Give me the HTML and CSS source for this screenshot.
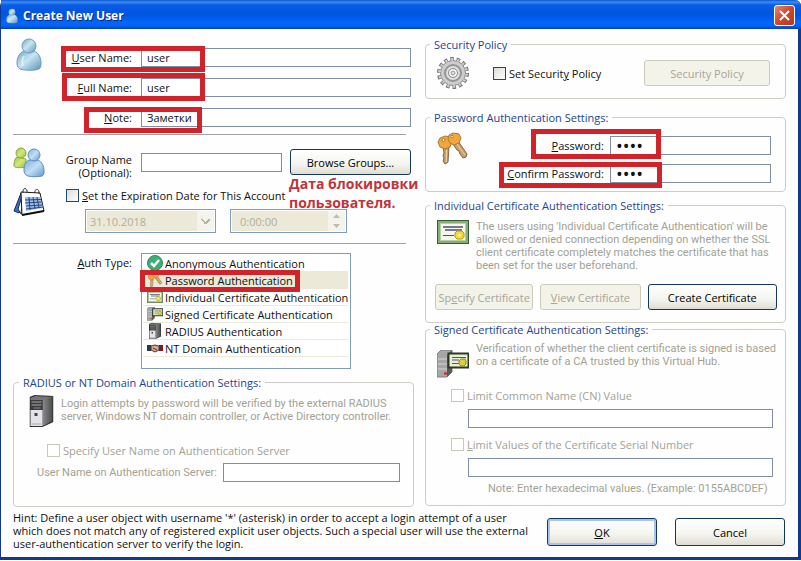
FILE: index.html
```html
<!DOCTYPE html>
<html lang="en">
<head>
<meta charset="utf-8">
<title>Create New User</title>
<link rel="stylesheet" href="styles.css">
</head>
<body>
<svg width="0" height="0" class="defs" aria-hidden="true">
  <defs>
    <linearGradient id="gBlue" x1="0" y1="0" x2="1" y2="1"><stop offset="0" stop-color="#6ba6c6"/><stop offset=".45" stop-color="#c8e5f2"/><stop offset="1" stop-color="#5793b8"/></linearGradient>
    <linearGradient id="gSky" x1="0" y1="0" x2="1" y2="1"><stop offset="0" stop-color="#79aee0"/><stop offset=".5" stop-color="#c3def4"/><stop offset="1" stop-color="#5b97d2"/></linearGradient>
    <linearGradient id="gGreen" x1="0" y1="0" x2="1" y2="1"><stop offset="0" stop-color="#a4c63c"/><stop offset=".5" stop-color="#d3e585"/><stop offset="1" stop-color="#9abf2e"/></linearGradient>
    <linearGradient id="gTower" x1="0" y1="0" x2="1" y2="0"><stop offset="0" stop-color="#8b8b8b"/><stop offset="1" stop-color="#4c4c4c"/></linearGradient>
    <symbol id="person" viewBox="0 0 26 33">
      <path d="M8 13C3 15 1 20 1 25c0 4 2 6 5 6.500 5 1.200 14 1 17-.5 2-1 2-4 2-6 0-5-2-10-7-12z" fill="url(#gBlue)" stroke="#6b9cb8"/>
      <circle cx="13" cy="8" r="7" fill="url(#gBlue)" stroke="#6b9cb8"/>
      <path d="M8 18c-2 3-2 7-1 10" fill="none" stroke="#e8f7fd" stroke-width="2" opacity=".7"/>
    </symbol>
    <symbol id="keys" viewBox="0 0 32 34">
      <path d="M6 14h6l-1 16-3 2-2-3 1-3-1-2 1-3z" fill="#c9a066" stroke="#80684a"/>
      <path d="M16 12l5-3 9 13-1 3-3 1-3-4-1-3-2-1z" fill="#c9a066" stroke="#80684a"/>
      <path d="M3 6l5-2 5 1 2 5-2 5-5 2-5-2-2-5z" fill="#f3a43a" stroke="#a87a3c"/>
      <path d="M12 3l4-2 6 1 2 4-2 5-5 2-4-2-2-4z" fill="#f5a63a" stroke="#a87a3c"/>
      <circle cx="6.500" cy="8" r="1.500" fill="#fff" stroke="#a87526"/><circle cx="15" cy="4.500" r="1.200" fill="#fff" stroke="#a87526"/>
      <path d="M9.500 18v12M20 12l8 11" stroke="#f0cf98" fill="none"/>
    </symbol>
    <symbol id="cert" viewBox="0 0 32 24">
      <rect x=".5" y=".5" width="31" height="23" fill="#86ae74" stroke="#3d5c34"/>
      <rect x="3.500" y="3.500" width="25" height="17" fill="#f4f7ee" stroke="#b8d0a8"/>
      <path d="M6 7h20M8 10h17" stroke="#77778e" stroke-width="2"/><path d="M6 15.500h11" stroke="#555"/>
      <path d="M20 11h5l2 2v4l-2 2h-5l-2-2v-4z" fill="#f2d936" stroke="#b59a1a"/><circle cx="22.500" cy="15" r="1.500" fill="#fff3a0"/>
    </symbol>
    <symbol id="tower" viewBox="0 0 24 32">
      <path d="M0 2l5-2 19 1v26l-11 5H0z" fill="#333"/>
      <path d="M13 4l10-3v25l-10 5z" fill="url(#gTower)"/>
      <path d="M1 3l5-2 16 1-9 3H1z" fill="#777"/>
      <path d="M1 5h12v10H1z" fill="#3c3c3c"/><path d="M2 7h10M2 10h10" stroke="#aaa"/><path d="M4 13h7" stroke="#888"/>
      <path d="M1 15h12v16H1z" fill="#e4e4e8"/><rect x="5" y="18" width="3" height="3" fill="#444"/><path d="M2 29h10" stroke="#aaa"/>
    </symbol>
    <symbol id="signed" viewBox="0 0 32 28">
      <path d="M0 4l4-4h11v22l-5 5H0z" fill="#a6a6a6" stroke="#7e7e7e"/><path d="M10 5l5-5v22l-5 5z" fill="#5c5c5c"/>
      <path d="M1 9h9M1 14h9M1 19h9" stroke="#d6d6d6"/><path d="M7 23.500h3" stroke="#d02020" stroke-width="2"/>
      <rect x="11.500" y="3.500" width="20" height="14" fill="#e8efd8" stroke="#2d3a20" stroke-width="2"/>
      <path d="M15 7.500h14M15 10h7M15 13.500h7" stroke="#565664"/>
      <path d="M24 9h4l1 2v3l-2 2h-3l-2-2v-3z" fill="#dfce3a" stroke="#8e8a24"/>
    </symbol>
  </defs>
</svg>

<form class="window">
  <header class="titlebar">
    <svg class="title-icon" viewBox="0 0 26 33" aria-hidden="true"><use href="#person"/></svg>
    <h1>Create New User</h1>
    <button type="button" class="close" aria-label="Close"><svg viewBox="0 0 11 11"><path d="M1 1l9 9M10 1l-9 9" stroke="#fff" stroke-width="2" fill="none"/></svg></button>
  </header>

  <div class="columns">
    <div class="column left">
      <section class="user">
        <div class="icon-cell"><svg class="user-icon" viewBox="0 0 26 33" aria-hidden="true"><use href="#person"/></svg></div>
        <div class="fields">
          <div class="field mark mark-user"><label for="un"><u>U</u>ser Name:</label><input id="un" type="text" value="user"></div>
          <div class="field mark mark-full"><label for="fn"><u>F</u>ull Name:</label><input id="fn" type="text" value="user"></div>
          <div class="field mark mark-note"><label for="nt"><u>N</u>ote:</label><input id="nt" type="text" value="Заметки"></div>
        </div>
      </section>
      <hr>
      <section class="group">
        <div class="icon-cell">
          <svg class="group-icon" viewBox="0 0 32 31" aria-hidden="true">
            <path d="M4 10c-3 2-3 7-3 9 0 2 8 2 12 1V12z" fill="url(#gGreen)" stroke="#8aa83a"/><circle cx="8" cy="6" r="5" fill="url(#gGreen)" stroke="#8aa83a"/>
            <path d="M16 13c-4 2-5 6-5 10 0 3 1 5 4 6 4 1 10 1 14 0 2-1 2-3 2-5 0-5-2-9-6-11z" fill="url(#gSky)" stroke="#5d8cba"/><circle cx="21" cy="8" r="6" fill="url(#gSky)" stroke="#5d8cba"/>
          </svg>
        </div>
        <label for="gn">Group Name<br>(Optional):</label>
        <input id="gn" type="text">
        <button type="button" class="btn browse">Browse Groups...</button>
      </section>
      <section class="expire">
        <div class="icon-cell">
          <svg class="cal-icon" viewBox="0 0 32 30" aria-hidden="true">
            <path d="M8 6L1 24l5 2 5-8z" fill="#3f6fc4" stroke="#1a2850"/><path d="M10 6L5 22l3 5z" fill="#fff" stroke="#1a2850"/>
            <path d="M8 5l19 1 4 18-22 4z" fill="#fff" stroke="#1b1b1b"/><path d="M9 28l22-4" stroke="#111" stroke-width="2"/>
            <path d="M12 10l15 0 3 11-17 3z" fill="#9fc0ea"/>
            <path d="M12 13l16-.5M12 16l17-1M13 19l16-1M13 22l17-2M16 10l1 13M20 10l2 12M24 10l2 11" stroke="#24467f"/>
            <path d="M10 6c-1-6 5-6 4 0M22 6c-1-5 5-5 4 1" fill="none" stroke="#333"/>
          </svg>
        </div>
        <div class="expire-body">
          <label class="check"><input type="checkbox"><span><u>S</u>et the Expiration Date for This Account</span></label>
          <div class="when">
            <select class="date" disabled aria-label="Expiration date"><option>31.10.2018</option></select>
            <div class="time">
              <input type="text" value="0:00:00" disabled aria-label="Expiration time">
              <div class="spin">
                <button type="button" disabled aria-label="Later"><svg viewBox="0 0 7 4"><path d="M0 4l3.500-4L7 4z"/></svg></button>
                <button type="button" disabled aria-label="Earlier"><svg viewBox="0 0 7 4"><path d="M0 0l3.500 4L7 0z"/></svg></button>
              </div>
            </div>
          </div>
        </div>
        <p class="remark">Дата блокировки<br>пользователя.</p>
      </section>
      <hr>
      <section class="auth">
        <span class="auth-label" id="auth"><u>A</u>uth Type:</span>
        <div class="list mark" role="radiogroup" aria-labelledby="auth">
          <label><input type="radio" name="auth"><svg viewBox="0 0 16 16"><circle cx="8" cy="8" r="7.500" fill="#3fae76" stroke="#2d8d5c"/><path d="M4 8l3 3 5-6" stroke="#fff" stroke-width="2.500" fill="none"/></svg>Anonymous Authentication</label>
          <label><input type="radio" name="auth" checked><svg viewBox="0 0 32 34"><use href="#keys"/></svg>Password Authentication</label>
          <label><input type="radio" name="auth"><svg viewBox="0 0 32 24"><use href="#cert"/></svg>Individual Certificate Authentication</label>
          <label><input type="radio" name="auth"><svg viewBox="0 0 32 28"><use href="#signed"/></svg>Signed Certificate Authentication</label>
          <label><input type="radio" name="auth"><svg viewBox="0 0 24 32"><use href="#tower"/></svg>RADIUS Authentication</label>
          <label><input type="radio" name="auth"><svg viewBox="0 0 16 16"><path d="M0 5h4v6H0z" fill="#263a4c"/><path d="M12 5h4v6h-4z" fill="#7d1c22"/><path d="M4 6l4-1 4 1v4l-4 2-4-2z" fill="#d7a798" stroke="#5a3434"/><path d="M6 8l4 2" stroke="#5a3434"/></svg>NT Domain Authentication</label>
        </div>
      </section>
      <fieldset class="radius">
        <legend>RADIUS or NT Domain Authentication Settings:</legend>
        <div class="about">
          <svg class="tower-icon" viewBox="0 0 24 32" aria-hidden="true"><use href="#tower"/></svg>
          <p>Login attempts by password will be verified by the external RADIUS<br>server, Windows NT domain controller, or Active Directory controller.</p>
        </div>
        <label class="check off"><input type="checkbox" disabled><span>Specify User Name on Authentication Server</span></label>
        <div class="field fine"><label for="ru">User Name on Authentication Server:</label><input id="ru" type="text" disabled></div>
      </fieldset>
    </div>

    <div class="column right">
      <fieldset class="policy">
        <legend>Security Policy</legend>
        <div class="policy-row">
          <svg class="gear" viewBox="0 0 32 32" aria-hidden="true">
            <circle cx="16" cy="16" r="14" fill="none" stroke="#777" stroke-width="4" stroke-dasharray="3.500 2.783"/>
            <circle cx="16" cy="16" r="12.500" fill="#cdcdcd" stroke="#8a8a8a"/>
            <circle cx="16" cy="16" r="13.500" fill="none" stroke="#cdcdcd" stroke-width="3" stroke-dasharray="1.900 4.159" stroke-dashoffset="-.75"/>
            <circle cx="16" cy="16" r="8" fill="#dedede" stroke="#969696" stroke-width="2"/>
            <circle cx="16" cy="16" r="4.500" fill="#f8f8f8" stroke="#888"/><circle cx="16" cy="16" r="2" fill="#ddd" stroke="#999"/>
          </svg>
          <label class="check"><input type="checkbox"><span>Set Securit<u>y</u> Policy</span></label>
          <button type="button" class="btn" disabled>Security Policy</button>
        </div>
      </fieldset>

      <fieldset class="password">
        <legend>Password Authentication Settings:</legend>
        <div class="password-row">
          <svg class="keys-icon" viewBox="0 0 32 34" aria-hidden="true"><use href="#keys"/></svg>
          <div class="fields">
            <div class="field mark mark-pass"><label for="pw"><u>P</u>assword:</label><input id="pw" type="password" value="user"></div>
            <div class="field mark mark-confirm"><label for="cp"><u>C</u>onfirm Password:</label><input id="cp" type="password" value="user"></div>
          </div>
        </div>
      </fieldset>

      <fieldset class="individual">
        <legend>Individual Certificate Authentication Settings:</legend>
        <div class="about">
          <svg class="cert-icon" viewBox="0 0 32 24" aria-hidden="true"><use href="#cert"/></svg>
          <p>The users using 'Individual Certificate Authentication' will be<br>allowed or denied connection depending on whether the SSL<br>client certificate completely matches the certificate that has<br>been set for the user beforehand.</p>
        </div>
        <div class="buttons">
          <button type="button" class="btn" disabled>Sp<u>e</u>cify Certificate</button>
          <button type="button" class="btn" disabled><u>V</u>iew Certificate</button>
          <button type="button" class="btn">Create Certificate</button>
        </div>
      </fieldset>

      <fieldset class="signed">
        <legend>Signed Certificate Authentication Settings:</legend>
        <div class="about">
          <svg class="signed-icon" viewBox="0 0 32 28" aria-hidden="true"><use href="#signed"/></svg>
          <p>Verification of whether the client certificate is signed is based<br>on a certificate of a CA trusted by this Virtual Hub.</p>
        </div>
        <div class="limits">
          <label class="check off"><input type="checkbox" disabled><span>Limit Common Name (CN) Value</span></label>
          <input type="text" disabled aria-label="Common Name">
          <label class="check off"><input type="checkbox" disabled><span><u>L</u>imit Values of the Certificate Serial Number</span></label>
          <input type="text" disabled aria-label="Serial number">
          <p class="note fine">Note: Enter hexadecimal values. (Example: 0155ABCDEF)</p>
        </div>
      </fieldset>
    </div>
  </div>

  <footer>
    <p>Hint: Define a user object with username '*' (asterisk) in order to accept a login attempt of a user<br>which does not match any of registered explicit user objects. Such a special user will use the external<br>user-authentication server to verify the login.</p>
    <button type="button" class="btn default"><u>O</u>K</button>
    <button type="button" class="btn">Cancel</button>
  </footer>
</form>
</body>
</html>
```
FILE: styles.css
```css
*, *::after { box-sizing: border-box; }
body { margin: 0; background: #fff; color: #111; font: 11px/13px "Open Sans", "Noto Sans", sans-serif; }
p, h1 { margin: 0; }
svg { display: block; flex: none; }
.defs { position: absolute; }
input, button, select { font: inherit; color: inherit; margin: 0; }

.window { border: solid #123a8c; border-width: 0 3px 3px 1px; border-radius: 6px 6px 0 0; background: #fefefe; }

.titlebar { display: flex; align-items: center; height: 29px; margin-right: -3px; padding: 2px 6px 0 5px; border-radius: 0 6px 0 0; background: linear-gradient(#0a54cc, #3b8df5 2px, #0a5ce4 5px, #0054e0 14px, #0366fb 23px, #0262f5 26px, #0b3fa8); }
.title-icon { width: 12px; height: 16px; margin-right: 5px; }
h1 { flex: 1; color: #fff; font-size: 12px; line-height: 18px; text-shadow: 1px 1px #0a2a80; }
.close { display: grid; place-items: center; width: 21px; height: 21px; padding: 0; border: 1px solid #fff; border-radius: 3px; background: linear-gradient(135deg, #e08a70, #d0462a 50%, #b03a20); }
.close svg { width: 11px; height: 11px; }

.columns { display: grid; grid-template-columns: 401fr 361fr; gap: 11px; padding: 9px 12px 0 12px; }
.column { min-width: 0; }

input[type="text"], input[type="password"] { min-width: 0; height: 19px; padding: 0 5px; border: 1px solid #7f8ea3; border-radius: 0; background: #fff; outline: 0; }
input[type="password"] { font-size: 18px; }
input[type="checkbox"] { appearance: none; flex: none; width: 13px; height: 13px; border: 1px solid #1d4a78; background: linear-gradient(135deg, #dcdcd8, #fff); }
input[type="checkbox"]:disabled { border-color: #cac8bb; background: #fff; }
.check { display: flex; align-items: center; gap: 3px; }
.off { color: #a3a294; }
.about, .fine { color: #a3a294; font-family: Roboto, sans-serif; white-space: nowrap; }
hr { margin: 0 8px 0 0; border: 0; border-top: 1px solid #a2a2a2; }

.icon-cell { flex: none; width: 44px; }
.fields { flex: 1; display: grid; }
.field { display: grid; align-items: center; position: relative; }
.field label { text-align: right; white-space: nowrap; }

/* red marker frames drawn over the filled fields */
.mark { position: relative; }
.mark::after { content: ""; position: absolute; border: 5px solid #d2232a; pointer-events: none; }
.mark-user::after { left: 4px; width: 144px; top: -2px; height: 26px; }
.mark-full::after { left: 5px; width: 143px; top: -5px; height: 28px; }
.mark-note::after { left: 27px; width: 118px; top: -1px; height: 26px; }
.mark-pass::after { right: 110px; width: 130px; top: -7px; height: 30px; }
.mark-confirm::after { right: 109px; width: 163px; top: -2px; height: 26px; }
.list.mark::after { left: -2px; width: 160px; top: 16px; height: 22px; }

.user { display: flex; padding: 0 3px 7px 0; }
.user-icon { width: 26px; height: 33px; margin-left: 3px; }
.user .fields { gap: 11px; padding-top: 10px; }
.user .field { grid-template-columns: 75px 1fr; gap: 9px; }

.group { display: flex; align-items: flex-start; padding: 14px 3px 0 0; }
.group-icon { width: 32px; height: 31px; margin-top: -2px; }
.group label { width: 75px; margin-top: 4px; text-align: right; }
.group input { flex: 1; margin: 4px 8px 0 9px; }

.btn { flex: none; height: 26px; padding: 0 2px; border: 1px solid #14375f; border-radius: 3px; background: linear-gradient(#fff, #f4f4ef 60%, #dfddd2); color: #000; white-space: nowrap; }
.btn:disabled { border-color: #cbcabb; background: #f4f3ea; color: #a6a596; }
.browse { width: 121px; }

.expire { display: flex; position: relative; padding: 8px 0 10px; }
.cal-icon { width: 32px; height: 30px; }
.expire-body { padding: 2px 0 0 9px; }
.when { display: flex; gap: 14px; margin: 7px 0 0 19px; }
.date, .time { height: 24px; border: 1px solid #7f9db9; border-radius: 0; color: #b0ae9c; }
.date { appearance: none; width: 131px; padding: 0 4px; opacity: 1; background: #ece9d8; box-shadow: inset 0 0 0 1px #fff; 
  background-image: linear-gradient(45deg, transparent 40%, #b5b3a4 40% 65%, transparent 65%), linear-gradient(-45deg, transparent 40%, #b5b3a4 40% 65%, transparent 65%), linear-gradient(#f4f3ec, #f4f3ec);
  background-size: 5px 5px, 5px 5px, 17px 20px; background-position: right 9px center, right 5px center, right 1px center; background-repeat: no-repeat; }
.time { display: flex; width: 117px; padding: 1px; background: #fff; }
.time input[type="text"] { flex: 1; height: 20px; padding: 0 8px; border: 0; background: #ece9d8; }
.spin { display: grid; width: 17px; background: #f4f3ec; }
.spin button { display: grid; place-items: center; padding: 0; border: 0; background: none; }
.spin svg { width: 7px; height: 4px; fill: #bdbbac; }
.remark { position: absolute; left: 276px; top: -5px; color: #c0343a; font-size: 14px; line-height: 19px; font-weight: 700; white-space: nowrap; }

.auth { display: flex; gap: 9px; padding-top: 9px; }
.auth-label { width: 119px; margin-top: 3px; text-align: right; }
.list { width: 210px; padding: 1px 2px 11px 1px; border: 1px solid #7f9db9; background: #fff; }
.list label { display: flex; align-items: center; gap: 2px; height: 17px; padding-left: 4px; border-bottom: 1px solid #ece9d8; white-space: nowrap; }
.list label:has(:checked) { background: #ece9d8; }
.list input { position: absolute; opacity: 0; }
.list svg { width: 16px; height: 16px; }

fieldset { min-width: 0; margin: 0; padding: 0 11px; border: 1px solid #cdcdc6; border-radius: 4px; }
legend { margin-left: -7px; padding: 0 4px; color: #1d4590; }
.about { display: flex; gap: 7px; }

.radius { margin-top: 7px; padding: 8px 13px 24px 15px; }
.radius legend { margin-left: -10px; }
.tower-icon { width: 25px; height: 32px; margin-top: -2px; }
.radius .check { margin: 17px 0 6px 18px; }
.radius .field { grid-template-columns: 188px 1fr; gap: 6px; }

.policy { padding: 6px 15px 9px 11px; }
.policy-row { display: flex; align-items: center; }
.gear { width: 32px; height: 32px; margin-right: 24px; }
.policy .btn { width: 126px; margin-left: auto; }

.password { margin-top: 12px; padding: 8px 14px 8px 11px; }
.password-row { display: flex; }
.keys-icon { width: 32px; height: 34px; }
.password .fields { gap: 9px; padding-top: 4px; }
.password .field { grid-template-columns: 1fr 161px; gap: 6px; }

.individual { margin-top: 7px; padding: 8px 8px 12px 11px; }
.cert-icon { width: 32px; height: 24px; }
.buttons { display: grid; grid-template-columns: 98fr 100fr 129fr; gap: 7px; margin: 12px 0 0 -2px; }

.signed { padding: 6px 12px 10px 11px; }
.signed-icon { width: 32px; height: 28px; margin-top: 8px; }
.limits { display: grid; margin-left: 14px; }
.limits .check { margin: 10px 0 7px; }
.limits .check:first-child { margin-top: 11px; }
.limits input[type="text"] { margin-left: 17px; }
.note { margin: 5px 0 0 37px; }

footer { display: flex; align-items: flex-start; gap: 18px; padding: 4px 13px 7px 12px; }
footer p { flex: 1; min-width: 0; white-space: nowrap; }
footer .btn { width: 110px; height: 28px; margin-top: 7px; }
.default { box-shadow: inset 0 0 0 2px #a9c4ee; }
```
